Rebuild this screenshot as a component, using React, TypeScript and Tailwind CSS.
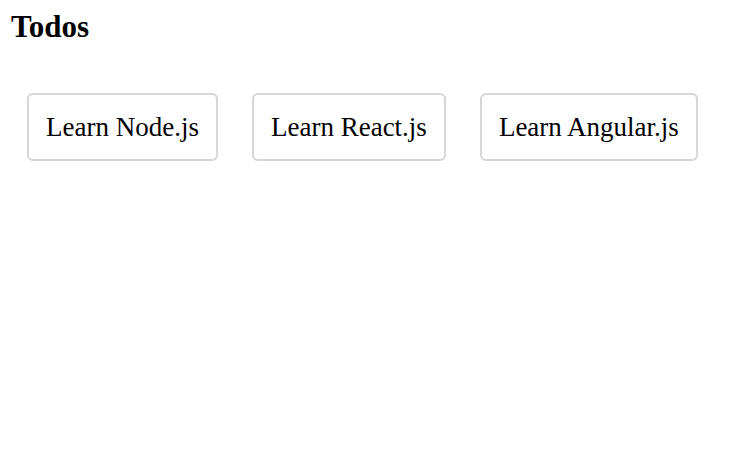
const todos = ['Learn Node.js', 'Learn React.js', 'Learn Angular.js'];

export default function App() {
  return (
    <div className="min-h-screen bg-white px-[11px] pt-[6px] text-black" style={{ fontFamily: '"Liberation Serif", serif' }}>
      <h1 className="text-[31px] font-bold leading-[42px]">Todos</h1>
      <div className="mt-[45px] flex gap-[34px] pl-[16px]">
        {todos.map((todo) => (
          <div
            key={todo}
            className="flex h-[68px] items-center rounded-[6px] border-2 border-[#d6d6d6] px-[17px] text-[27px]"
          >
            {todo}
          </div>
        ))}
      </div>
    </div>
  );
}
